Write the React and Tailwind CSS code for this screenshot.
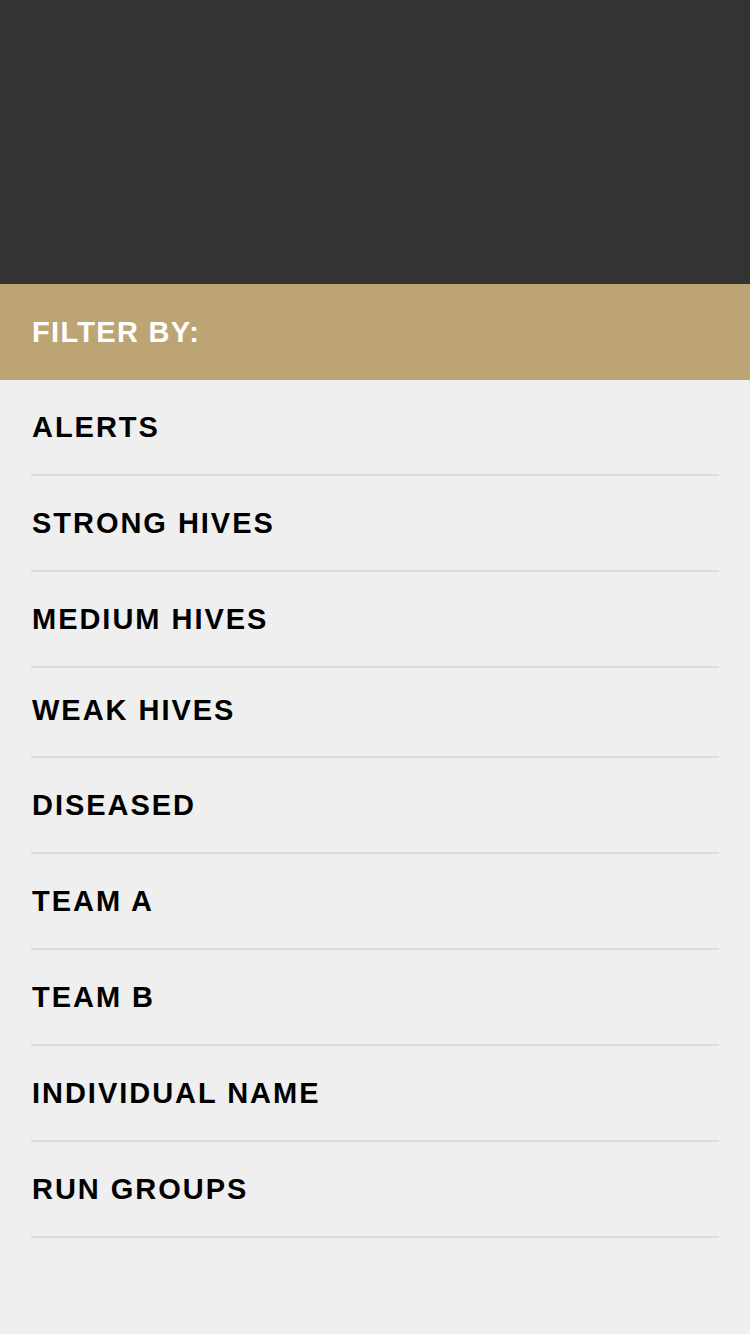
const filters = [
  { label: 'ALERTS', h: 'h-[96px]' },
  { label: 'STRONG HIVES', h: 'h-[96px]' },
  { label: 'MEDIUM HIVES', h: 'h-[96px]' },
  { label: 'WEAK HIVES', h: 'h-[90px] pb-[4px]' },
  { label: 'DISEASED', h: 'h-[96px]' },
  { label: 'TEAM A', h: 'h-[96px]' },
  { label: 'TEAM B', h: 'h-[96px]' },
  { label: 'INDIVIDUAL NAME', h: 'h-[96px]' },
  { label: 'RUN GROUPS', h: 'h-[96px]' },
]

export default function App() {
  return (
    <div className="min-h-[1334px] w-[750px] bg-[#efefef] font-['Liberation_Sans',Arial,sans-serif]">
      <div className="h-[284px] bg-[#333333]" />
      <div className="flex h-[96px] items-center bg-[#bda474] px-8">
        <h2 className="text-[29px] font-bold leading-none tracking-[0.045em] text-white">FILTER BY:</h2>
      </div>
      <ul className="pl-[31px] pr-[31px]">
        {filters.map((f) => (
          <li
            key={f.label}
            className={`flex items-center border-b-2 border-[#dcdcdc] pl-px ${f.h}`}
          >
            <span className="text-[29px] font-bold leading-none tracking-[0.068em] text-black">{f.label}</span>
          </li>
        ))}
      </ul>
    </div>
  )
}
